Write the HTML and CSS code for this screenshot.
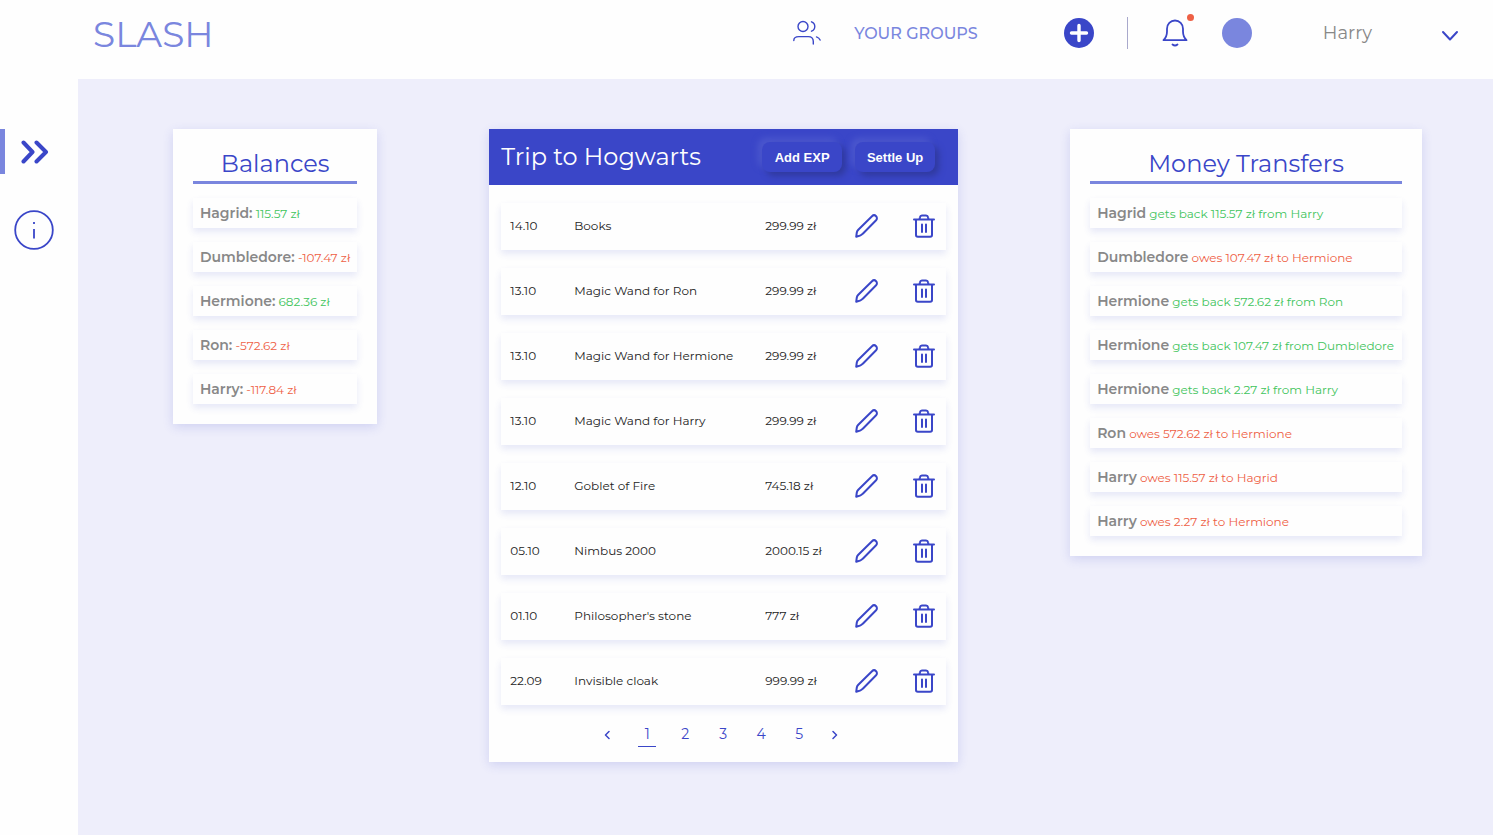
FILE: index.html
```
<!DOCTYPE html>
<html lang="en">
<head>
<meta charset="utf-8">
<meta name="viewport" content="width=device-width, initial-scale=1">
<title>Slash</title>
<link rel="stylesheet" href="styles.css">
</head>
<body>
<svg class="sprite" aria-hidden="true">
  <symbol id="pencil" viewBox="0 0 24 24"><path d="M1.200 22.800l.6-4.300c.2-1.200.7-2 1.500-2.800L17 2.200a2.900 2.900 0 0 1 4.100 0c1.100 1.100 1.100 2.900 0 4L7.800 19.700c-.8.900-1.600 1.500-2.800 1.900z"/></symbol>
  <symbol id="trash" viewBox="0 0 22 24"><path d="M1 5.500h20M3 5.500V21a1.800 1.800 0 0 0 1.800 1.800h12.400A1.800 1.800 0 0 0 19 21V5.500M6.500 5l.5-1.800A2 2 0 0 1 9 1.500h4a2 2 0 0 1 2 1.700L15.500 5M9 10.500v7.500M13 10.500v7.500"/></symbol>
</svg>
<div class="app">
  <header class="topbar">
    <a class="logo" href="#">SLASH</a>
    <nav class="menu">
      <a class="groups" href="#">
        <svg class="icon" width="28" height="26" viewBox="0 0 28 26" stroke-width="1.400"><circle cx="10" cy="6.500" r="5"/><path d="M.8 20.500c0-2.500 2-3.900 5-3.900h9.500c3.500 0 5 2 5 5V24M18.500 1.800a5 5 0 0 1 0 9.400M23.500 16.900c1.800.6 3 1.700 3.600 3.200"/></svg>
        <span>YOUR GROUPS</span>
      </a>
      <button class="plain add" aria-label="Add group"><svg width="30" height="30" viewBox="0 0 30 30"><circle cx="15" cy="15" r="15" fill="#3a46c8"/><path d="M15 7.500v15M7.500 15h15" stroke="#fff" stroke-width="3.400" stroke-linecap="round"/></svg></button>
      <span class="divider"></span>
      <button class="plain bell" aria-label="Notifications"><svg class="icon" width="26" height="28" viewBox="0 0 26 28" stroke-width="1.800"><path d="M1.500 21.200h23c-2.400-2.400-3.500-5-3.500-8.700V9.700C21 5 17.500 1.500 13 1.500S5 5 5 9.700v2.800c0 3.700-1.100 6.300-3.500 8.700zM10.500 25.500q2.500 2 5 0"/></svg><span class="dot"></span></button>
      <span class="avatar"></span>
      <span class="user">Harry</span>
      <button class="plain caret" aria-label="Account menu"><svg class="icon" width="18" height="12" viewBox="0 0 18 12" stroke-width="2"><path d="M2 2l7 7.500L16 2"/></svg></button>
    </nav>
  </header>
  <aside class="sidebar">
    <button class="plain side active" aria-label="Expand menu"><svg class="icon" width="28" height="24" viewBox="0 0 28 24" stroke-width="4"><path d="M2.500 2.500L11.500 12 2.500 21.500M15.500 2.500L25 12 15.500 21.500"/></svg></button>
    <button class="plain side" aria-label="Information"><svg class="icon" width="40" height="40" viewBox="0 0 40 40" stroke-width="1.800"><circle cx="20" cy="20" r="18.800"/><path d="M20 19v9.500M20 12v2" stroke-linecap="butt"/></svg></button>
  </aside>
  <main class="content">
    <section class="card summary">
      <h2>Balances</h2>
      <ul>
        <li><b>Hagrid:</b> <span class="plus">115.57 zł</span></li>
        <li><b>Dumbledore:</b> <span class="minus">-107.47 zł</span></li>
        <li><b>Hermione:</b> <span class="plus">682.36 zł</span></li>
        <li><b>Ron:</b> <span class="minus">-572.62 zł</span></li>
        <li><b>Harry:</b> <span class="minus">-117.84 zł</span></li>
      </ul>
    </section>
    <section class="card trip">
      <div class="trip-head">
        <h1>Trip to Hogwarts</h1>
        <button class="action">Add EXP</button>
        <button class="action">Settle Up</button>
      </div>
      <div class="trip-body">
        <table>
          <colgroup><col class="c-date"><col class="c-name"><col class="c-sum"><col class="c-edit"><col></colgroup>
          <tbody>
            <tr><td>14.10</td><td>Books</td><td>299.99 zł</td><td class="tool"><button class="plain" aria-label="Edit"><svg class="icon" width="24" height="24" stroke-width="2"><use href="#pencil"/></svg></button></td><td class="tool last"><button class="plain" aria-label="Delete"><svg class="icon" width="22" height="24" stroke-width="2"><use href="#trash"/></svg></button></td></tr>
            <tr><td>13.10</td><td>Magic Wand for Ron</td><td>299.99 zł</td><td class="tool"><button class="plain" aria-label="Edit"><svg class="icon" width="24" height="24" stroke-width="2"><use href="#pencil"/></svg></button></td><td class="tool last"><button class="plain" aria-label="Delete"><svg class="icon" width="22" height="24" stroke-width="2"><use href="#trash"/></svg></button></td></tr>
            <tr><td>13.10</td><td>Magic Wand for Hermione</td><td>299.99 zł</td><td class="tool"><button class="plain" aria-label="Edit"><svg class="icon" width="24" height="24" stroke-width="2"><use href="#pencil"/></svg></button></td><td class="tool last"><button class="plain" aria-label="Delete"><svg class="icon" width="22" height="24" stroke-width="2"><use href="#trash"/></svg></button></td></tr>
            <tr><td>13.10</td><td>Magic Wand for Harry</td><td>299.99 zł</td><td class="tool"><button class="plain" aria-label="Edit"><svg class="icon" width="24" height="24" stroke-width="2"><use href="#pencil"/></svg></button></td><td class="tool last"><button class="plain" aria-label="Delete"><svg class="icon" width="22" height="24" stroke-width="2"><use href="#trash"/></svg></button></td></tr>
            <tr><td>12.10</td><td>Goblet of Fire</td><td>745.18 zł</td><td class="tool"><button class="plain" aria-label="Edit"><svg class="icon" width="24" height="24" stroke-width="2"><use href="#pencil"/></svg></button></td><td class="tool last"><button class="plain" aria-label="Delete"><svg class="icon" width="22" height="24" stroke-width="2"><use href="#trash"/></svg></button></td></tr>
            <tr><td>05.10</td><td>Nimbus 2000</td><td>2000.15 zł</td><td class="tool"><button class="plain" aria-label="Edit"><svg class="icon" width="24" height="24" stroke-width="2"><use href="#pencil"/></svg></button></td><td class="tool last"><button class="plain" aria-label="Delete"><svg class="icon" width="22" height="24" stroke-width="2"><use href="#trash"/></svg></button></td></tr>
            <tr><td>01.10</td><td>Philosopher's stone</td><td>777 zł</td><td class="tool"><button class="plain" aria-label="Edit"><svg class="icon" width="24" height="24" stroke-width="2"><use href="#pencil"/></svg></button></td><td class="tool last"><button class="plain" aria-label="Delete"><svg class="icon" width="22" height="24" stroke-width="2"><use href="#trash"/></svg></button></td></tr>
            <tr><td>22.09</td><td>Invisible cloak</td><td>999.99 zł</td><td class="tool"><button class="plain" aria-label="Edit"><svg class="icon" width="24" height="24" stroke-width="2"><use href="#pencil"/></svg></button></td><td class="tool last"><button class="plain" aria-label="Delete"><svg class="icon" width="22" height="24" stroke-width="2"><use href="#trash"/></svg></button></td></tr>
          </tbody>
        </table>
        <nav class="pages" aria-label="Pages">
          <a class="prev" href="#" aria-label="Previous"><svg class="icon" width="6" height="10" viewBox="0 0 6 10" stroke-width="1.500"><path d="M5 1.500L1.500 5 5 8.500"/></svg></a>
          <a class="current" href="#">1</a>
          <a href="#">2</a>
          <a href="#">3</a>
          <a href="#">4</a>
          <a href="#">5</a>
          <a class="next" href="#" aria-label="Next"><svg class="icon" width="6" height="10" viewBox="0 0 6 10" stroke-width="1.500"><path d="M1 1.500L4.500 5 1 8.500"/></svg></a>
        </nav>
      </div>
    </section>
    <section class="card summary">
      <h2>Money Transfers</h2>
      <ul>
        <li><b>Hagrid</b> <span class="plus">gets back 115.57 zł from Harry</span></li>
        <li><b>Dumbledore</b> <span class="minus">owes 107.47 zł to Hermione</span></li>
        <li><b>Hermione</b> <span class="plus">gets back 572.62 zł from Ron</span></li>
        <li><b>Hermione</b> <span class="plus">gets back 107.47 zł from Dumbledore</span></li>
        <li><b>Hermione</b> <span class="plus">gets back 2.27 zł from Harry</span></li>
        <li><b>Ron</b> <span class="minus">owes 572.62 zł to Hermione</span></li>
        <li><b>Harry</b> <span class="minus">owes 115.57 zł to Hagrid</span></li>
        <li><b>Harry</b> <span class="minus">owes 2.27 zł to Hermione</span></li>
      </ul>
    </section>
  </main>
</div>
</body>
</html>
```
FILE: styles.css
```
* { box-sizing: border-box; }
body {
  margin: 0;
  font-family: Montserrat, Inter, "Open Sans", sans-serif;
  font-size: 12px;
  color: #222;
  background: #fefefe;
}
h1, h2, ul { margin: 0; padding: 0; font-weight: 400; }
ul { list-style: none; }
a { text-decoration: none; color: inherit; }
.sprite { position: absolute; width: 0; height: 0; }
.icon { fill: none; stroke: #3a46c8; stroke-linecap: round; stroke-linejoin: round; display: block; }
.plain { border: 0; padding: 0; background: none; cursor: pointer; }
.plain svg { display: block; }

.app {
  display: grid;
  grid-template: auto 1fr / 78px 1fr;
  min-height: 100vh;
}
.topbar {
  grid-column: 1 / -1;
  height: 79px;
  padding: 0 34px 11px 93px;
  display: flex;
  align-items: center;
  justify-content: space-between;
}
.logo { font-size: 36px; font-weight: 400; color: #7a86de; }
.menu { display: flex; align-items: center; padding-bottom: 2px; }
.groups {
  display: flex;
  align-items: center;
  gap: 33px;
  margin-right: 86px;
  font-size: 16px;
  font-weight: 500;
  color: #7a86de;
}
.divider { width: 1px; height: 32px; margin: 0 34px 0 33px; background: #a9a9cc; }
.bell { position: relative; }
.dot {
  position: absolute;
  top: -5px;
  right: -6px;
  width: 7px;
  height: 7px;
  border-radius: 50%;
  background: #ee6045;
}
.avatar { width: 30px; height: 30px; margin: 0 71px 0 34px; border-radius: 50%; background: #7a86de; }
.user { margin-right: 69px; font-size: 18px; color: #888; }
.caret { padding-top: 5px; }

.sidebar { display: flex; flex-direction: column; align-items: stretch; gap: 31px; padding-top: 50px; }
.side { display: flex; align-items: center; height: 50px; padding-left: 14px; }
.side.active { height: 45px; padding-left: 16px; border-left: 5px solid #7a86de; }

.content {
  display: grid;
  grid-template-columns: 204fr 469fr 352fr;
  align-items: start;
  gap: 112px;
  padding: 50px 71px 50px 95px;
  background: #eeeefb;
}
.card { background: #fefefe; box-shadow: 0 3px 10px rgba(58, 70, 200, .16); }

.summary { padding: 20px; }
.summary h2 {
  margin-bottom: 14px;
  padding-bottom: 2px;
  border-bottom: 3px solid #7a86de;
  font-size: 24px;
  line-height: 30px;
  text-align: center;
  color: #3a46c8;
}
.summary ul { display: grid; gap: 14px; }
.summary li {
  height: 30px;
  padding: 0 7px;
  line-height: 30px;
  white-space: nowrap;
  box-shadow: 0 4px 7px rgba(58, 70, 200, .12);
}
.summary b { font-size: 14px; font-weight: 600; color: #888; }
.plus { color: #3ec45c; }
.minus { color: #ee6045; }

.trip-head {
  display: flex;
  align-items: center;
  gap: 13px;
  height: 56px;
  padding: 0 23px 0 12px;
  background: #3a46c8;
}
.trip-head h1 { margin-right: auto; padding-bottom: 2px; font-size: 24px; color: #fefefe; white-space: nowrap; }
.action {
  width: 80px;
  height: 30px;
  padding: 0;
  border: 0;
  border-radius: 8px;
  background: #3a46c8;
  color: #fefefe;
  font: bold 13px "Liberation Sans", Arial, sans-serif;
  box-shadow: 4px 4px 6px #303a9f, -4px -4px 6px #4c58ce;
  white-space: nowrap;
}
.trip-body { padding: 0 12px; }
table { width: 100%; table-layout: fixed; border-collapse: separate; border-spacing: 0 18px; }
.c-date { width: 64px; }
.c-name { width: 191px; }
.c-sum { width: 82px; }
.c-edit { width: 57px; }
tr { height: 47px; box-shadow: 0 4px 7px rgba(58, 70, 200, .12); }
td { padding: 0 0 2px 9px; white-space: nowrap; }
.tool { padding: 0 0 2px; }
.tool .plain { display: block; margin: 0 auto; }
.last { padding-left: 6px; }
.pages {
  display: flex;
  justify-content: center;
  gap: 20px;
  padding-bottom: 15px;
  padding-right: 9px;
  font-size: 14px;
  line-height: 23px;
  color: #3a46c8;
}
.pages a { display: flex; align-items: center; justify-content: center; min-width: 18px; border-bottom: 1px solid transparent; }
.pages .current { border-color: #3a46c8; }
.pages .prev { min-width: 22px; }
.pages .next { min-width: 14px; }
```
